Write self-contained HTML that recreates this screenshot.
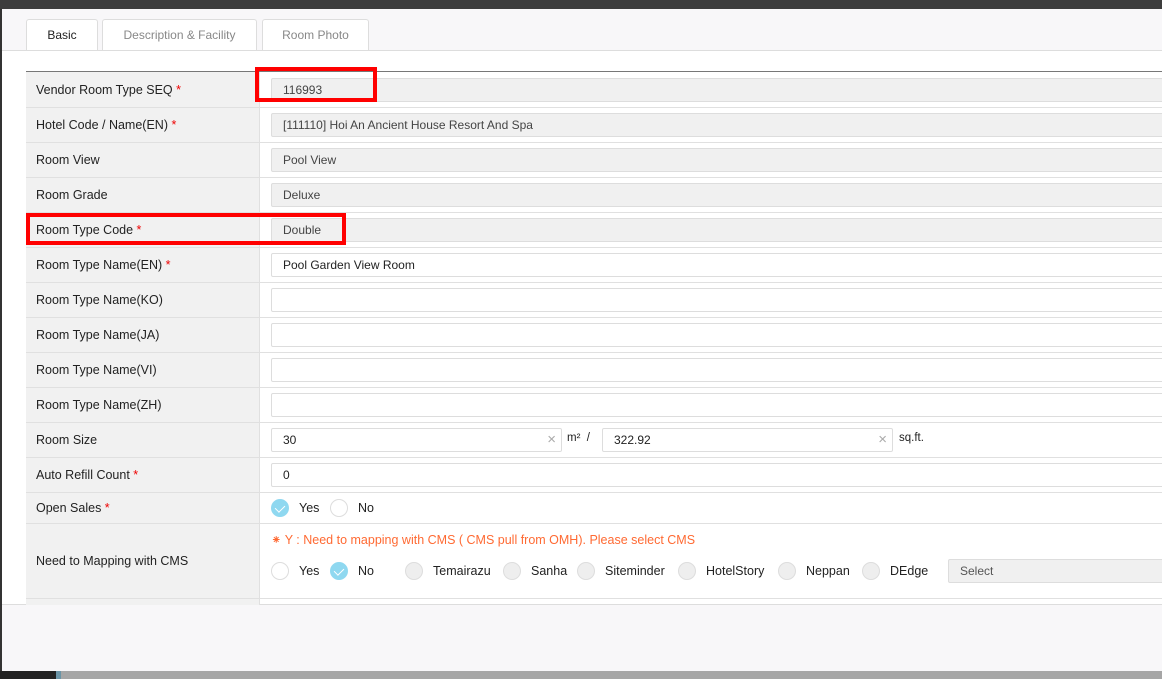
<!DOCTYPE html>
<html><head><style>
*{box-sizing:border-box;margin:0;padding:0}
body{width:1162px;height:679px;overflow:hidden;background:#f8f7f9;font-family:"Liberation Sans",sans-serif;font-size:12.5px;color:#222;position:relative}
.top{position:absolute;left:0;top:0;width:1162px;height:9px;background:#3d3d3d}
.lb{position:absolute;left:0;top:9px;width:2px;height:662px;background:#333}
.bot{position:absolute;left:0;top:671px;width:1162px;height:8px;background:#a6a6a6}
.bot i{position:absolute;left:0;top:0;width:56px;height:8px;background:#222}
.bot b{position:absolute;left:56px;top:0;width:5px;height:8px;background:#6a94a6}
.tab{position:absolute;top:19px;height:32px;border:1px solid #ddd;border-bottom:none;background:#fff;border-radius:3px 3px 0 0;text-align:center;line-height:30px;color:#888;font-size:12px}
.main{position:absolute;left:2px;top:50px;width:1160px;height:555px;background:#fff;border-top:1px solid #ddd;border-bottom:1px solid #ddd}
.row{position:absolute;left:26px;width:1136px;border-bottom:1px solid #e0e0e0}
.row .l{position:absolute;left:0;top:0;bottom:0;width:234px;background:#f1f1f1;border-right:1px solid #e0e0e0;padding-left:10px;display:flex;align-items:center;font-size:12.5px}
.s{color:#e00}
.inp{position:absolute;height:24px;border:1px solid #ddd;border-radius:2px;background:#fff;padding-left:11px;line-height:22px;font-size:12px}
.ro{background:#f0f0f0;color:#444}
.rad{position:absolute;width:18px;height:18px;border-radius:50%;border:1px solid #ddd;background:#fff}
.rad.on{background:#8fd8f0;border-color:#8fd8f0}
.rad.on:after{content:"";position:absolute;left:5px;top:3px;width:5px;height:8px;border:solid #fff;border-width:0 1.5px 1.5px 0;transform:rotate(45deg)}
.rad.g{background:#eee}
.t{position:absolute;font-size:12.5px}
.red{position:absolute;border:4px solid #f00}
</style></head><body>
<div class="top"></div>
<div class="tab" style="left:26px;width:72px;color:#222;height:33px">Basic</div>
<div class="tab" style="left:102px;width:155px">Description &amp; Facility</div>
<div class="tab" style="left:262px;width:107px">Room Photo</div>
<div class="main"></div>
<div style="position:absolute;left:26px;top:71px;width:1136px;height:1px;background:#777"></div>
<div class="lb"></div>

<div class="row" style="top:72px;height:36px"><div class="l">Vendor Room Type SEQ&nbsp;<span class="s">*</span></div></div>
<div class="inp ro" style="left:271px;top:78px;width:900px">116993</div>
<div class="row" style="top:108px;height:35px"><div class="l">Hotel Code / Name(EN)&nbsp;<span class="s">*</span></div></div>
<div class="inp ro" style="left:271px;top:113px;width:900px">[111110] Hoi An Ancient House Resort And Spa</div>
<div class="row" style="top:143px;height:35px"><div class="l">Room View</div></div>
<div class="inp ro" style="left:271px;top:148px;width:900px">Pool View</div>
<div class="row" style="top:178px;height:35px"><div class="l">Room Grade</div></div>
<div class="inp ro" style="left:271px;top:183px;width:900px">Deluxe</div>
<div class="row" style="top:213px;height:35px"><div class="l">Room Type Code&nbsp;<span class="s">*</span></div></div>
<div class="inp ro" style="left:271px;top:218px;width:900px">Double</div>
<div class="row" style="top:248px;height:35px"><div class="l">Room Type Name(EN)&nbsp;<span class="s">*</span></div></div>
<div class="inp" style="left:271px;top:253px;width:900px">Pool Garden View Room</div>
<div class="row" style="top:283px;height:35px"><div class="l">Room Type Name(KO)</div></div>
<div class="inp" style="left:271px;top:288px;width:900px"></div>
<div class="row" style="top:318px;height:35px"><div class="l">Room Type Name(JA)</div></div>
<div class="inp" style="left:271px;top:323px;width:900px"></div>
<div class="row" style="top:353px;height:35px"><div class="l">Room Type Name(VI)</div></div>
<div class="inp" style="left:271px;top:358px;width:900px"></div>
<div class="row" style="top:388px;height:35px"><div class="l">Room Type Name(ZH)</div></div>
<div class="inp" style="left:271px;top:393px;width:900px"></div>
<div class="row" style="top:423px;height:35px"><div class="l">Room Size</div></div>
<div class="inp" style="left:271px;top:428px;width:291px">30<span style="position:absolute;right:5px;color:#aaa;font-size:15px">×</span></div>
<div class="t" style="left:567px;top:432px;font-size:11.5px">m²&nbsp;&nbsp;/</div>
<div class="inp" style="left:602px;top:428px;width:291px">322.92<span style="position:absolute;right:5px;color:#aaa;font-size:15px">×</span></div>
<div class="t" style="left:899px;top:432px;font-size:11.5px">sq.ft.</div>
<div class="row" style="top:458px;height:35px"><div class="l">Auto Refill Count&nbsp;<span class="s">*</span></div></div>
<div class="inp" style="left:271px;top:463px;width:900px">0</div>
<div class="row" style="top:493px;height:31px"><div class="l">Open Sales&nbsp;<span class="s">*</span></div></div>
<div class="rad on" style="left:271px;top:499px"></div><div class="t" style="left:299px;top:501px">Yes</div>
<div class="rad" style="left:330px;top:499px"></div><div class="t" style="left:358px;top:501px">No</div>
<div class="row" style="top:524px;height:75px"><div class="l">Need to Mapping with CMS</div></div>
<div class="t" style="left:271px;top:532px;color:#ff6a33">⁕ Y : Need to mapping with CMS ( CMS pull from OMH). Please select CMS</div>
<div class="rad" style="left:271px;top:562px"></div><div class="t" style="left:299px;top:564px">Yes</div>
<div class="rad on" style="left:330px;top:562px"></div><div class="t" style="left:358px;top:564px">No</div>
<div class="rad g" style="left:405px;top:562px"></div><div class="t" style="left:433px;top:564px">Temairazu</div>
<div class="rad g" style="left:503px;top:562px"></div><div class="t" style="left:531px;top:564px">Sanha</div>
<div class="rad g" style="left:577px;top:562px"></div><div class="t" style="left:605px;top:564px">Siteminder</div>
<div class="rad g" style="left:678px;top:562px"></div><div class="t" style="left:706px;top:564px">HotelStory</div>
<div class="rad g" style="left:778px;top:562px"></div><div class="t" style="left:806px;top:564px">Neppan</div>
<div class="rad g" style="left:862px;top:562px"></div><div class="t" style="left:890px;top:564px">DEdge</div>
<div class="inp ro" style="left:948px;top:559px;width:230px;color:#555">Select</div>
<div class="row" style="top:599px;height:6px;border:none"><div class="l"></div></div>

<div class="red" style="left:255px;top:67px;width:122px;height:35px"></div>
<div class="red" style="left:26px;top:213px;width:320px;height:32px"></div>
<div class="bot"><i></i><b></b></div>
</body></html>
